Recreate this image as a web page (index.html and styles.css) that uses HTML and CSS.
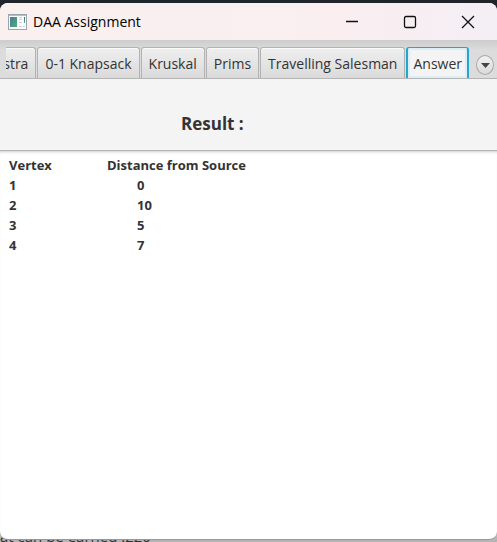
FILE: index.html
```html
<!DOCTYPE html>
<html lang="en">
<head>
<meta charset="utf-8">
<title>DAA Assignment</title>
<link rel="stylesheet" href="styles.css">
</head>
<body>
<p class="behind">at can be earned :220</p>
<main class="window">
  <header class="titlebar">
    <svg class="app-icon" width="19" height="16" viewBox="0 0 19 16" aria-hidden="true">
      <defs>
        <linearGradient id="pic" x1="0" y1="0" x2="1" y2="1"><stop offset="0" stop-color="#4a78a8"/><stop offset="1" stop-color="#4fae6a"/></linearGradient>
        <linearGradient id="bar" x1="0" y1="0" x2="0" y2="1"><stop offset="0" stop-color="#2c5a9c"/><stop offset="1" stop-color="#5cb878"/></linearGradient>
      </defs>
      <rect x=".5" y=".5" width="18" height="15" fill="#fafcfd" stroke="#9aa5ad"/>
      <path d="M1 1.500H18" stroke="#b4bec5"/>
      <rect x="2" y="3" width="7" height="10" fill="url(#pic)"/>
      <path d="M11 3.500h3M11 5.500h3M11 8.500h3M11 12.500h3M15 12.500h2" stroke="#cfd3d6"/>
      <rect x="16" y="3" width="1" height="6" fill="url(#bar)"/>
    </svg>
    <h1 class="title">DAA Assignment</h1>
    <div class="controls">
      <button class="control" aria-label="Minimize"><svg width="14" height="14" viewBox="0 0 14 14"><path d="M1 6.500H13"/></svg></button>
      <button class="control" aria-label="Maximize"><svg width="14" height="14" viewBox="0 0 14 14"><rect x="1.500" y="1.500" width="11" height="11" rx="1.500"/></svg></button>
      <button class="control" aria-label="Close"><svg width="14" height="14" viewBox="0 0 14 14"><path d="M1 1L13 13M13 1L1 13"/></svg></button>
    </div>
  </header>
  <nav class="tabbar">
    <div class="tabs" role="tablist">
      <button class="tab" role="tab">Dijkstra</button>
      <button class="tab" role="tab">0-1 Knapsack</button>
      <button class="tab" role="tab">Kruskal</button>
      <button class="tab" role="tab">Prims</button>
      <button class="tab" role="tab">Travelling Salesman</button>
      <button class="tab selected" role="tab" aria-selected="true">Answer</button>
    </div>
    <button class="more" aria-label="More tabs"><svg width="9" height="5" viewBox="0 0 9 5"><path d="M0 0H9L4.500 5Z"/></svg></button>
  </nav>
  <h2 class="heading">Result :</h2>
  <section class="answer">
    <table class="result">
      <thead><tr><th>Vertex</th><th>Distance from Source</th></tr></thead>
      <tbody>
        <tr><td>1</td><td>0</td></tr>
        <tr><td>2</td><td>10</td></tr>
        <tr><td>3</td><td>5</td></tr>
        <tr><td>4</td><td>7</td></tr>
      </tbody>
    </table>
  </section>
</main>
</body>
</html>
```
FILE: styles.css
```css
* { box-sizing: border-box; }

body {
  margin: 0;
  height: 100vh;
  padding: 3px 0 2px;
  overflow: hidden;
  position: relative;
  display: flex;
  background: linear-gradient(#20242b 50%, #b4b5b5 50%);
  color: #333;
  font-family: "Open Sans", "Noto Sans", sans-serif;
  font-size: 14px;
}

.behind {
  position: absolute;
  left: 0;
  bottom: -4px;
  margin: 0;
  font-size: 15px;
  line-height: 20px;
}

.window {
  position: relative;
  flex: 1;
  min-width: 0;
  display: flex;
  flex-direction: column;
  overflow: hidden;
  border-bottom: 1px solid #999;
  border-radius: 8px;
  background: #fff;
}

.titlebar {
  display: flex;
  align-items: center;
  height: 37px;
  padding-left: 8px;
  background: linear-gradient(90deg, #f9f0ef, #faeef1 70%, #f4eff5);
}

.title {
  flex: 1;
  margin: 0 0 0 6px;
  color: #000;
  font-size: 14px;
  font-weight: 400;
}

.controls { display: flex; }

.control {
  display: grid;
  place-items: center;
  width: 58px;
  height: 36px;
  padding: 0;
  border: 0;
  background: none;
}

.control svg {
  fill: none;
  stroke: #111;
  stroke-width: 1.3px;
}

.tabbar {
  display: flex;
  height: 39px;
  padding: 7px 3px 0 6px;
  border-bottom: 1px solid #b5b5b5;
  background: linear-gradient(#cdcdcd, #dcdcdc 10px);
}

.tabs {
  flex: 1;
  min-width: 0;
  display: flex;
  justify-content: flex-end;
  gap: 1px;
  overflow: hidden;
}

.tab {
  flex: none;
  height: 31px;
  padding: 0 7px;
  border: 1px solid #b2b2b2;
  border-bottom: 0;
  border-radius: 3px 3px 0 0;
  background: linear-gradient(#efefef, #dadada);
  box-shadow: inset 0 1px #fafafa;
  color: #333;
  font: inherit;
}

.selected {
  padding: 0 5px;
  border: 1px solid #22a7d3;
  border-width: 1px 2px 0;
  background: #f4f4f4;
  box-shadow: inset 0 0 0 2px #dceff6;
}

.more {
  display: grid;
  place-items: center;
  width: 18px;
  height: 20px;
  margin: 8px 0 0 7px;
  padding: 0;
  border: 1px solid #aaa;
  border-radius: 50%;
  background: linear-gradient(#f1f1f1, #dadada);
}

.more svg { fill: #444; }

.heading {
  height: 71px;
  margin: 0;
  padding: 33px 0 0 181px;
  background: #f4f4f4;
  font-size: 17px;
  line-height: 24px;
}

.answer {
  flex: 1;
  padding: 4px 9px;
  border-top: 1px solid #b5b5b5;
  box-shadow: inset 0 3px 3px -2px #ccc;
}

.result {
  border-collapse: collapse;
  font-size: 13px;
  font-weight: 700;
  line-height: 20px;
}

.result th,
.result td {
  padding: 0;
  text-align: left;
}

.result th:first-child { width: 98px; }
.result td:last-child { padding-left: 30px; }
```
